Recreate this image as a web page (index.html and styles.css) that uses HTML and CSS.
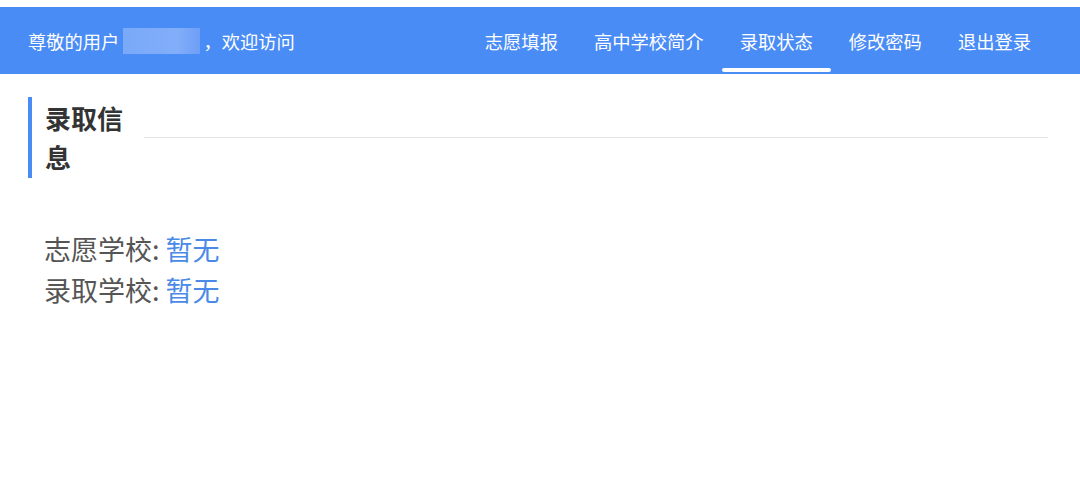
FILE: index.html
```html
<!DOCTYPE html>
<html lang="zh-CN">
<head>
    <meta charset="UTF-8">
    <meta name="viewport" content="width=device-width, initial-scale=1.0">
    <title>录取状态</title>
    <link rel="stylesheet" href="styles.css">
</head>
<body>
    <header class="topbar">
        <div class="greeting">
            <span>尊敬的用户</span><span class="username"></span><span>，欢迎访问</span>
        </div>
        <nav class="menu">
            <a href="#" class="menu-item">志愿填报</a>
            <a href="#" class="menu-item">高中学校简介</a>
            <a href="#" class="menu-item active">录取状态</a>
            <a href="#" class="menu-item">修改密码</a>
            <a href="#" class="menu-item">退出登录</a>
        </nav>
    </header>

    <div class="panel">
        <div class="panel-head">
            <h2 class="panel-title">录取信息</h2>
            <div class="panel-rule"></div>
        </div>
        <div class="info">
            <p class="info-row">志愿学校: <span class="info-value">暂无</span></p>
            <p class="info-row">录取学校: <span class="info-value">暂无</span></p>
        </div>
    </div>
</body>
</html>
```

FILE: styles.css
```css
body {
    font-family: "Noto Sans CJK SC", "Noto Sans", sans-serif;
    background-color: #fff;
    margin: 0;
    padding: 7px 0 0;
}

.topbar {
    display: flex;
    justify-content: space-between;
    align-items: stretch;
    height: 67px;
    padding: 0 31px 0 28px;
    background-color: #4a8cf6;
    color: #fff;
}

.greeting {
    display: flex;
    align-items: center;
    font-size: 18.3px;
}

.username {
    width: 77px;
    height: 26px;
    margin: 0 3px 0 4px;
    background: linear-gradient(90deg, #79a9f9 0%, #82aef9 70%, #6e9ef7 100%);
}

.menu {
    display: flex;
}

.menu-item {
    position: relative;
    display: flex;
    align-items: center;
    padding: 0 18px;
    font-size: 18.3px;
    color: #fff;
    text-decoration: none;
}

.menu-item.active::after {
    content: "";
    position: absolute;
    left: 0;
    right: 0;
    bottom: 2px;
    height: 4px;
    border-radius: 2px;
    background-color: #fff;
}

.panel {
    margin: 23px 32px 0 28px;
}

.panel-head {
    display: flex;
    align-items: center;
    border-left: 4px solid #4a8cf6;
    padding: 1px 0 2px 13px;
}

.panel-title {
    width: 84px;
    margin: 0;
    font-size: 26px;
    line-height: 39px;
    font-weight: bold;
    color: #333;
}

.panel-rule {
    flex: 1;
    height: 1px;
    margin-left: 15px;
    background-color: #e4e4e4;
}

.info {
    margin-top: 50px;
    padding-left: 16px;
}

.info-row {
    margin: 0;
    font-size: 27px;
    line-height: 41px;
    color: #555;
}

.info-value {
    color: #4a8ae6;
}
```
